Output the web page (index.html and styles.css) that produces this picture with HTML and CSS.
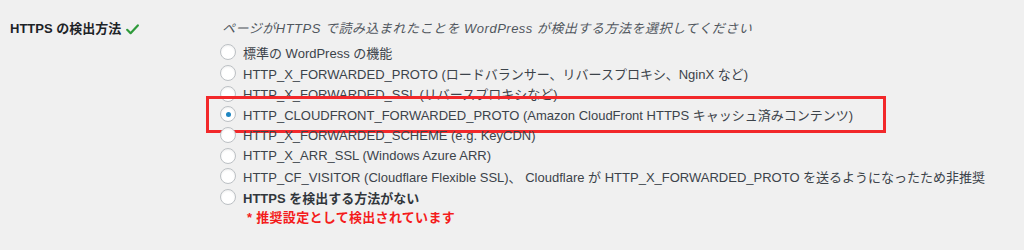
FILE: index.html
```html
<!DOCTYPE html>
<html lang="ja">
<head>
<meta charset="utf-8">
<title>HTTPS の検出方法</title>
<link rel="stylesheet" href="styles.css">
</head>
<body>
<div class="form-row">
  <div class="th">
    <span class="th-label">HTTPS の検出方法</span>
    <svg class="check" width="13" height="11" viewBox="0 0 13 11" aria-hidden="true"><path d="M1.2 5.8 L4.6 9.2 L11.8 1.4" fill="none" stroke="#2e9a3a" stroke-width="2.2" stroke-linecap="round" stroke-linejoin="round"/></svg>
  </div>
  <div class="td">
    <p class="desc">ページがHTTPS で読み込まれたことを WordPress が検出する方法を選択してください</p>
    <fieldset class="options">
      <label class="opt"><input type="radio" name="m" class="radio"><span>標準の WordPress の機能</span></label>
      <label class="opt"><input type="radio" name="m" class="radio"><span>HTTP_X_FORWARDED_PROTO (ロードバランサー、リバースプロキシ、NginX など)</span></label>
      <label class="opt"><input type="radio" name="m" class="radio"><span>HTTP_X_FORWARDED_SSL (リバースプロキシなど)</span></label>
      <label class="opt opt-marked"><input type="radio" name="m" class="radio" checked><span>HTTP_CLOUDFRONT_FORWARDED_PROTO (Amazon CloudFront HTTPS キャッシュ済みコンテンツ)</span></label>
      <label class="opt"><input type="radio" name="m" class="radio"><span>HTTP_X_FORWARDED_SCHEME (e.g. KeyCDN)</span></label>
      <label class="opt"><input type="radio" name="m" class="radio"><span>HTTP_X_ARR_SSL (Windows Azure ARR)</span></label>
      <label class="opt"><input type="radio" name="m" class="radio"><span>HTTP_CF_VISITOR (Cloudflare Flexible SSL)、 Cloudflare が HTTP_X_FORWARDED_PROTO を送るようになったため非推奨</span></label>
      <label class="opt"><input type="radio" name="m" class="radio"><span class="strong">HTTPS を検出する方法がない</span></label>
      <p class="note">* 推奨設定として検出されています</p>
    </fieldset>
  </div>
</div>
</body>
</html>
```

FILE: styles.css
```css
html, body {
  margin: 0;
  padding: 0;
  background: #f0f0f0;
}
body {
  font-family: "Liberation Sans", "Noto Sans CJK JP", sans-serif;
  font-size: 13px;
  color: #3c434a;
  height: 250px;
  overflow: hidden;
}
.form-row {
  display: flex;
  padding-top: 19px;
}
.th {
  flex: none;
  width: 220px;
  padding-left: 10px;
  box-sizing: border-box;
  display: flex;
  align-items: center;
  gap: 5px;
  height: 20px;
}
.th-label {
  font-weight: bold;
  color: #1d2327;
  line-height: 20px;
}
.check {
  display: block;
  margin-top: 1px;
}
.td {
  flex: 1;
  min-width: 0;
}
.desc {
  margin: 0 0 3px 2px;
  line-height: 20px;
  font-style: italic;
  color: #50575e;
  letter-spacing: 0.5px;
}
.options {
  border: 0;
  margin: 0;
  padding: 0;
}
.opt {
  display: flex;
  align-items: center;
  height: 20.7px;
  white-space: nowrap;
  position: relative;
}
.radio {
  appearance: none;
  -webkit-appearance: none;
  margin: 0 7px 0 0;
  width: 16px;
  height: 16px;
  border-radius: 50%;
  border: 1px solid #bcc0c4;
  background: #fff;
  box-shadow: inset 0 1px 2px rgba(0, 0, 0, 0.07);
  box-sizing: border-box;
  display: flex;
  align-items: center;
  justify-content: center;
  flex: none;
}
.radio:checked::before {
  content: "";
  width: 5px;
  height: 5px;
  border-radius: 50%;
  background: #1f86c2;
}
.strong {
  font-weight: bold;
  color: #32373c;
}
.opt-marked::after {
  content: "";
  position: absolute;
  left: -14px;
  top: -8px;
  width: 680px;
  bottom: -8px;
  border: 3px solid #f2282a;
  box-sizing: border-box;
}
.note {
  margin: 0 0 0 27px;
  line-height: 20px;
  font-weight: bold;
  color: #f41c1c;
  letter-spacing: 0.3px;
}
```
